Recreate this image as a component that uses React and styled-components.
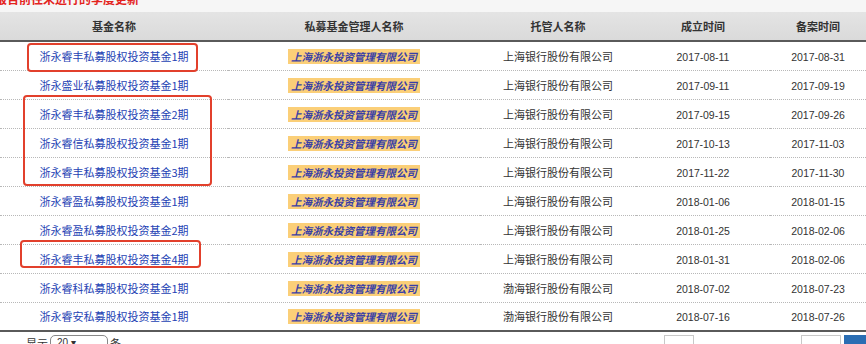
import React from 'react';
import styled, { createGlobalStyle } from 'styled-components';

const GlobalStyle = createGlobalStyle`
  html, body {
    margin: 0;
    padding: 0;
    background: #fff;
    overflow: hidden;
  }
  body {
    font-family: "Liberation Sans", "Noto Sans CJK SC", sans-serif;
  }
`;

const funds = [
  { name: '浙永睿丰私募股权投资基金1期', bank: '上海银行股份有限公司', setup: '2017-08-11', record: '2017-08-31' },
  { name: '浙永盛业私募股权投资基金1期', bank: '上海银行股份有限公司', setup: '2017-09-11', record: '2017-09-19' },
  { name: '浙永睿丰私募股权投资基金2期', bank: '上海银行股份有限公司', setup: '2017-09-15', record: '2017-09-26' },
  { name: '浙永睿信私募股权投资基金1期', bank: '上海银行股份有限公司', setup: '2017-10-13', record: '2017-11-03' },
  { name: '浙永睿丰私募股权投资基金3期', bank: '上海银行股份有限公司', setup: '2017-11-22', record: '2017-11-30' },
  { name: '浙永睿盈私募股权投资基金1期', bank: '上海银行股份有限公司', setup: '2018-01-06', record: '2018-01-15' },
  { name: '浙永睿盈私募股权投资基金2期', bank: '上海银行股份有限公司', setup: '2018-01-25', record: '2018-02-06' },
  { name: '浙永睿丰私募股权投资基金4期', bank: '上海银行股份有限公司', setup: '2018-01-31', record: '2018-02-06' },
  { name: '浙永睿科私募股权投资基金1期', bank: '渤海银行股份有限公司', setup: '2018-07-02', record: '2018-07-23' },
  { name: '浙永睿安私募股权投资基金1期', bank: '渤海银行股份有限公司', setup: '2018-07-16', record: '2018-07-26' },
];

// red annotation boxes, in table coordinates
const marks = [
  { left: 27, top: 31, width: 171, height: 29 },
  { left: 23, top: 83, width: 189, height: 91 },
  { left: 20, top: 228, width: 181, height: 28 },
];

function App() {
  return (
    <Page>
      <GlobalStyle />
      <Notice>
        <NoticeText>报告前往未进行的季度更新</NoticeText>
      </Notice>
      <TableWrap>
        <Table>
          <colgroup>
            <col style={{ width: 228 }} />
            <col style={{ width: 252 }} />
            <col style={{ width: 156 }} />
            <col style={{ width: 134 }} />
            <col />
          </colgroup>
          <thead>
            <tr>
              <Th>基金名称</Th>
              <Th>私募基金管理人名称</Th>
              <Th>托管人名称</Th>
              <Th>成立时间</Th>
              <Th>备案时间</Th>
            </tr>
          </thead>
          <tbody>
            {funds.map((f, i) => (
              <Row key={f.name} last={i === funds.length - 1}>
                <Td><FundLink>{f.name}</FundLink></Td>
                <Td><Manager>上海浙永投资管理有限公司</Manager></Td>
                <Td><Plain>{f.bank}</Plain></Td>
                <Td><DateText>{f.setup}</DateText></Td>
                <Td><DateText>{f.record}</DateText></Td>
              </Row>
            ))}
          </tbody>
        </Table>
        {marks.map((m) => (
          <Mark key={m.top} style={{ left: m.left, top: m.top, width: m.width, height: m.height }} />
        ))}
      </TableWrap>
      <Footer>
        <PageSize>
          显示
          <Select>20 ▾</Select>
          条
        </PageSize>
        <Pager>
          <PageBox w={30} />
          <Spacer />
          <PageBox w={40} />
          <PageBox w={22} active />
        </Pager>
      </Footer>
    </Page>
  );
}

export default App;

const Page = styled.div`
  width: 866px;
  height: 344px;
  overflow: hidden;
  background: #f6f6f6;
`;

const Notice = styled.div`
  height: 12px;
  overflow: hidden;
  background: #f6f6f6;
`;

const NoticeText = styled.div`
  margin-top: -8px;
  margin-left: -5px;
  font-family: "Noto Sans CJK SC", sans-serif;
  font-size: 12px;
  line-height: 14px;
  font-weight: 700;
  color: #e3231d;
`;

const TableWrap = styled.div`
  position: relative;
  background: #fff;
`;

const Table = styled.table`
  width: 866px;
  border-collapse: collapse;
  table-layout: fixed;
`;

const Th = styled.th`
  height: 28px;
  padding: 0;
  background: linear-gradient(#e4e4e4, #dadada);
  border-bottom: 2px solid #5a5a5a;
  font-family: "Noto Sans CJK SC", sans-serif;
  font-size: 11px;
  font-weight: 700;
  color: #333;
  text-align: center;
`;

const Row = styled.tr`
  height: 29px;
  border-bottom: ${(p) => (p.last ? '2px solid #5a5a5a' : '1px dotted #b8b8b8')};
`;

const Td = styled.td`
  padding: 0;
  text-align: center;
  white-space: nowrap;
`;

const FundLink = styled.span`
  font-family: "Noto Sans CJK SC", sans-serif;
  font-size: 11px;
  color: #2442b4;
`;

const Manager = styled.span`
  display: inline-block;
  padding: 0 3px;
  line-height: 15px;
  background: #fbcf78;
  font-family: "Noto Sans CJK SC", sans-serif;
  font-size: 10.5px;
  font-weight: 700;
  font-style: italic;
  color: #3a3fa6;
`;

const Plain = styled.span`
  font-family: "Noto Sans CJK SC", sans-serif;
  font-size: 11px;
  color: #333;
`;

const DateText = styled.span`
  font-family: "Liberation Sans", sans-serif;
  font-size: 10.5px;
  color: #333;
`;

const Mark = styled.div`
  position: absolute;
  box-sizing: border-box;
  border: 2px solid #e2402c;
  border-radius: 4px;
`;

const Footer = styled.div`
  display: flex;
  align-items: flex-start;
  justify-content: space-between;
  padding-top: 3px;
  background: #fff;
  height: 20px;
`;

const PageSize = styled.div`
  display: flex;
  align-items: center;
  gap: 2px;
  padding-left: 26px;
  font-family: "Noto Sans CJK SC", sans-serif;
  font-size: 11px;
  color: #333;
  line-height: 16px;
`;

const Select = styled.span`
  display: inline-block;
  width: 50px;
  height: 14px;
  padding-left: 6px;
  border: 1px solid #888;
  border-radius: 5px;
  font-family: "Liberation Sans", sans-serif;
  font-size: 10px;
  line-height: 14px;
`;

const Pager = styled.div`
  display: flex;
  align-items: flex-start;
`;

const Spacer = styled.div`
  width: 104px;
`;

const PageBox = styled.div`
  width: ${(p) => p.w}px;
  height: 20px;
  margin-left: 3px;
  box-sizing: border-box;
  border: 1px solid ${(p) => (p.active ? '#2a6db3' : '#c8c8c8')};
  background: ${(p) => (p.active ? '#2a6db3' : '#fff')};
`;
